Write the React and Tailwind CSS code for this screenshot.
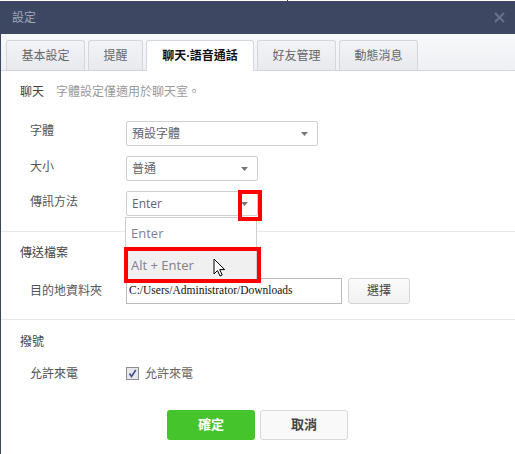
import React from 'react';

const font = { fontFamily: '"Open Sans", "Noto Sans CJK TC", sans-serif' };

const tabs = [
  { label: '基本設定', w: 'w-[79px]' },
  { label: '提醒', w: 'w-[55px]' },
  { label: '聊天·語音通話', w: 'w-[108px]', active: true },
  { label: '好友管理', w: 'w-[79px]' },
  { label: '動態消息', w: 'w-[79px]' },
];

const Caret = () => (
  <svg width="7" height="4" viewBox="0 0 7 4" className="shrink-0">
    <path d="M0 0h7L3.5 4z" fill="#777" />
  </svg>
);

const Select = ({ value, width }) => (
  <div className={`${width} h-[25px] border border-[#cfcfcf] rounded-[2px] bg-white flex items-center justify-between pl-[5px] pr-[9px] text-[12px] text-[#5f6470]`}>
    <span>{value}</span>
    <Caret />
  </div>
);

const Row = ({ label, children, labelClass = '' }) => (
  <div className="flex items-center pl-[29px]">
    <div className={`w-[96px] text-[12px] text-[#555] ${labelClass}`}>{label}</div>
    {children}
  </div>
);

const Cursor = () => (
  <svg width="13" height="19" viewBox="0 0 13 19" className="absolute left-[212px] top-[257px]">
    <path d="M1 1v15l3.5-3.5 2.5 5.5 2.2-1-2.5-5.4h5z" fill="#fff" stroke="#000" strokeWidth="1" strokeLinejoin="round" />
  </svg>
);

export default function App() {
  return (
    <div className="w-[515px] h-[454px] bg-white overflow-hidden" style={font}>
      <div className="h-[1px] bg-white relative">
        <div className="absolute left-[287px] top-0 w-[1px] h-[1px] bg-[#333]" />
      </div>
      <div className="relative h-[453px] border-l border-[#3d4660]">
        {/* title bar */}
        <div className="h-[33px] -ml-[1px] bg-[#3e4761] flex items-center justify-between pl-[12px] pr-[10px]">
          <span className="text-[12px] text-[#9ea7bb]">設定</span>
          <svg width="11" height="11" viewBox="0 0 11 11">
            <path d="M1 1l9 9M10 1l-9 9" stroke="#68718a" strokeWidth="2.2" />
          </svg>
        </div>

        {/* tabs */}
        <div className="h-[37px] bg-gradient-to-b from-[#f8f9fb] to-[#eef0f3] border-b border-[#d3d6dc] flex items-end pl-[5px] gap-[3px]">
          {tabs.map((t) =>
            t.active ? (
              <div
                key={t.label}
                className={`${t.w} h-[31px] -mb-[1px] bg-white border border-b-0 border-[#d3d6dc] rounded-t-[3px] flex items-center justify-center text-[12px] font-bold text-[#111]`}
              >
                {t.label}
              </div>
            ) : (
              <div
                key={t.label}
                className={`${t.w} h-[30px] bg-gradient-to-b from-[#f3f4f7] to-[#e7e9ed] border border-b-0 border-[#d3d6dc] rounded-t-[3px] flex items-center justify-center text-[12px] text-[#666]`}
              >
                {t.label}
              </div>
            )
          )}
        </div>

        {/* chat section */}
        <div className="pt-[13px] pb-[15px] border-b border-[#e8e8e8]">
          <div className="pl-[19px] text-[12px] leading-[16px]">
            <span className="text-[#444]">聊天</span>
            <span className="ml-[12px] text-[#9a9a9a]">字體設定僅適用於聊天室。</span>
          </div>
          <div className="mt-[21px] flex flex-col gap-[10px]">
            <Row label="字體" labelClass="pb-[5px]">
              <Select value="預設字體" width="w-[192px]" />
            </Row>
            <Row label="大小" labelClass="pb-[3px]">
              <Select value="普通" width="w-[132px]" />
            </Row>
            <Row label="傳訊方法" labelClass="pb-[4px]">
              <Select value="Enter" width="w-[132px]" />
            </Row>
          </div>
        </div>

        {/* file section */}
        <div className="pt-[13px] pb-[15px] border-b border-[#e8e8e8]">
          <div className="pl-[19px] text-[12px] leading-[16px] text-[#444]">傳送檔案</div>
          <div className="mt-[17px]">
            <Row label="目的地資料夾">
              <div
                className="w-[216px] h-[26px] border border-[#bcbcbc] bg-white flex items-center pl-[2px] text-[11.5px] text-[#111]"
                style={{ fontFamily: '"Liberation Serif", serif' }}
              >
                C:/Users/Administrator/Downloads
              </div>
              <div className="ml-[6px] w-[62px] h-[26px] border border-[#d5d5d5] rounded-[3px] bg-gradient-to-b from-[#fbfbfb] to-[#f1f1f1] flex items-center justify-center text-[12px] text-[#444]">
                選擇
              </div>
            </Row>
          </div>
        </div>

        {/* call section */}
        <div className="pt-[14px]">
          <div className="pl-[19px] text-[12px] leading-[16px] text-[#444]">撥號</div>
          <div className="mt-[11px] h-[25px] flex items-center">
            <Row label="允許來電">
              <div className="flex items-center gap-[6px]">
                <div className="w-[13px] h-[13px] border border-[#8d8d8d] bg-[#e6e8ee] flex items-center justify-center">
                  <svg width="9" height="9" viewBox="0 0 9 9">
                    <path d="M1.5 4.5l2 3L7.8 1" fill="none" stroke="#3c4f8c" strokeWidth="1.6" />
                  </svg>
                </div>
                <span className="text-[12px] text-[#666]">允許來電</span>
              </div>
            </Row>
          </div>
          <div className="mt-[24px] flex justify-center gap-[5px] pr-[1px]">
            <div className="w-[88px] h-[30px] rounded-[3px] bg-[#46c42c] flex items-center justify-center text-[13px] font-bold text-white">
              確定
            </div>
            <div className="w-[88px] h-[30px] rounded-[3px] border border-[#d9d9d9] bg-[#f9f9f9] flex items-center justify-center text-[13px] font-bold text-[#444]">
              取消
            </div>
          </div>
        </div>

        {/* dropdown list */}
        <div className="absolute left-[124px] top-[216px] w-[132px] border border-[#cfcfcf] bg-white text-[13px] text-[#7d8290]">
          <div className="h-[31px] flex items-center pl-[5px]">Enter</div>
          <div className="h-[33px] flex items-center pl-[5px] bg-[#f0f0f0]">Alt + Enter</div>
        </div>

        {/* highlight boxes */}
        <div className="absolute left-[237px] top-[189px] w-[24px] h-[31px] border-[4px] border-[#f00]" />
        <div className="absolute left-[123px] top-[246px] w-[137px] h-[36px] border-[4px] border-[#f00]" />
        <Cursor />
      </div>
    </div>
  );
}
